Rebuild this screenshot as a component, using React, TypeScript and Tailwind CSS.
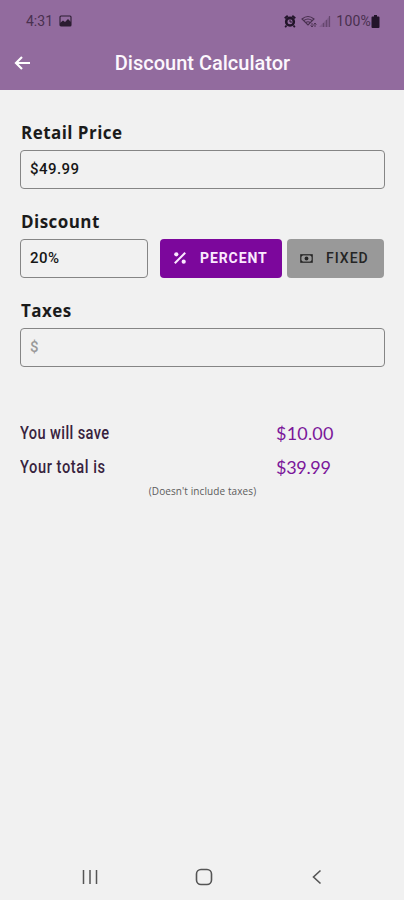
import React, { useState } from 'react';

function StatusBar() {
  return (
    <div className="flex h-[42px] items-center justify-between pl-[26px] pr-[24px] text-[#49304f]">
      <div className="flex items-center gap-[6px]">
        <span className="font-['Roboto'] text-[14px] leading-[16px]">4:31</span>
        <svg width="13" height="12" viewBox="0 0 13 12" className="text-[#2b1c31]">
          <rect x="1" y="1" width="11" height="10" rx="1" fill="none" stroke="currentColor" strokeWidth="1.1" />
          <path d="M1 11V8l3-2.5 2 1.5 3-3 3 3v4z" fill="currentColor" />
        </svg>
      </div>
      <div className="flex items-center">
        {/* Alarm */}
        <svg width="12" height="13" viewBox="0 0 12 13" className="mr-[5px] text-[#22152a]">
          <path d="M0.700 3.200l3-2.400M11.300 3.200L8.300 0.800M2.500 10.500l-1.300 1.700M9.500 10.500l1.300 1.700" stroke="currentColor" strokeWidth="1.800" />
          <circle cx="6" cy="6.700" r="3.800" fill="none" stroke="currentColor" strokeWidth="2.600" />
          <path d="M6 4.500v2.500h2" fill="none" stroke="currentColor" strokeWidth="1" />
        </svg>
        {/* Wifi */}
        <svg width="16" height="13" viewBox="0 0 16 13" className="mr-[2px]">
          <path d="M1 4Q7 -1 13 4L7 10ZM3 5.500Q7 2.500 11 5.500M5 7.500Q7 6 9 7.500" fill="none" stroke="currentColor" strokeWidth="1.100" />
          <path d="M11 12V8m-1.500 2.500L11 12l1.500-1.500M14 12V8m-1.500 1.500L14 8l1.500 1.500" fill="none" stroke="currentColor" strokeWidth="0.900" />
        </svg>
        {/* Signal */}
        <svg width="12" height="13" viewBox="0 0 12 13" className="mr-[5px] opacity-60">
          <path d="M0 12L11 1v11z" fill="currentColor" fillOpacity="0.35" />
          <path d="M4.500 12V8M7.500 12V5M10.500 12V1" stroke="currentColor" strokeWidth="1.200" />
        </svg>
        <span className="font-['Roboto'] text-[14px] leading-[16px] tracking-[0.2px]">100%</span>
        <svg width="9" height="13" viewBox="0 0 9 13" className="text-[#22152a]">
          <path d="M3 0h3v1.500h1.500Q8.500 1.500 8.500 2.500V12q0 1-1 1h-6q-1 0-1-1V2.500q0-1 1-1H3z" fill="currentColor" />
        </svg>
      </div>
    </div>
  );
}

function Label({ children }: { children: React.ReactNode }) {
  return (
    <div className="h-[28px] pl-px font-['Open_Sans'] text-[17px] font-bold leading-[22px] tracking-[0.45px] text-[#1b1b1b]">
      {children}
    </div>
  );
}

const fieldClass =
  "h-[39px] rounded-[4px] border border-[#858585] bg-transparent pl-[9px] pb-px font-['Roboto'] text-[15px] font-medium tracking-[0.45px] text-[#161616] outline-none placeholder:text-[#999999]";

export default function DiscountCalculator() {
  const [price, setPrice] = useState('$49.99');
  const [discount, setDiscount] = useState('20%');
  const [taxes, setTaxes] = useState('');

  return (
    <div className="flex h-[900px] w-[404px] flex-col overflow-hidden bg-[#f1f1f1]">
      <header className="h-[90px] bg-[#926b9e]">
        <StatusBar />
        <div className="grid h-[42px] grid-cols-[46px_1fr_45px] items-center">
          <button className="ml-[14px]" aria-label="Back">
            <svg width="17" height="16" viewBox="0 0 17 16" fill="none" stroke="white" strokeWidth="2.200">
              <path d="M16 8H2M8 2L2 8l6 6" />
            </svg>
          </button>
          <h1 className="whitespace-nowrap text-center font-['Roboto'] text-[20px] font-medium leading-[24px] text-[#fcf7fd]">
            Discount Calculator
          </h1>
        </div>
      </header>

      <main className="flex flex-1 flex-col pl-[20px] pr-[19px] pt-[32px]">
        <Label>Retail Price</Label>
        <input className={`${fieldClass} w-full`} value={price} onChange={(e) => setPrice(e.target.value)} />

        <div className="mt-[22px]">
          <Label>Discount</Label>
          <div className="flex">
            <input className={`${fieldClass} w-[128px]`} value={discount} onChange={(e) => setDiscount(e.target.value)} />
            <button className="ml-[12px] flex h-[39px] w-[122px] items-center rounded-[4px] bg-[#7c079c] pl-[14px] pb-px text-[#fbe9ff]">
              <svg width="12" height="12" viewBox="0 0 12 12">
                <path d="M0.800 11.200L11.200 0.800" stroke="currentColor" strokeWidth="2" />
                <circle cx="2.300" cy="2.300" r="2.100" fill="currentColor" />
                <circle cx="9.700" cy="9.700" r="2.100" fill="currentColor" />
              </svg>
              <span className="ml-[14px] font-['Roboto'] text-[14px] font-bold leading-[18px] tracking-[0.9px]">PERCENT</span>
            </button>
            <button className="ml-[5px] flex h-[39px] w-[97px] items-center rounded-[4px] bg-[#999999] pl-[13px] pb-px text-[#252525]">
              <svg width="13" height="9" viewBox="0 0 13 9">
                <rect x="0.800" y="0.800" width="11.400" height="7.400" fill="none" stroke="currentColor" strokeWidth="1.200" />
                <path d="M1 1h2L1 3zM12 1h-2l2 2zM1 8h2L1 6zM12 8h-2l2-2z" fill="currentColor" />
                <circle cx="6.500" cy="4.500" r="1.900" fill="currentColor" />
              </svg>
              <span className="ml-[13px] font-['Roboto'] text-[14px] font-medium leading-[18px] tracking-[1px]">FIXED</span>
            </button>
          </div>
        </div>

        <div className="mt-[22px]">
          <Label>Taxes</Label>
          <input
            className={`${fieldClass} w-full`}
            placeholder="$"
            value={taxes}
            onChange={(e) => setTaxes(e.target.value)}
          />
        </div>

        {/* Results */}
        <div className="mt-[49px] grid grid-cols-[256px_1fr] text-[18px] leading-[34px]">
          <div className="origin-left scale-x-[0.77] whitespace-nowrap font-['Roboto'] text-[19px] font-medium tracking-[0.5px] text-[#38233e]">
            You will save
          </div>
          <div className="font-['Lato'] tracking-[0.2px] text-[#7b179a]">$10.00</div>
          <div className="origin-left scale-x-[0.77] whitespace-nowrap font-['Roboto'] text-[19px] font-medium tracking-[0.75px] text-[#38233e]">
            Your total is
          </div>
          <div className="font-['Lato'] tracking-[-0.3px] text-[#7b179a]">$39.99</div>
        </div>
        <p className="-mt-px text-center font-['Open_Sans'] text-[10px] leading-[16px] tracking-[0.1px] text-[#5c5c5c]">(Doesn't include taxes)</p>
      </main>

      <nav className="flex h-[48px] items-center justify-between pl-[82px] pr-[82px] pt-px text-[#555555]">
        <svg width="16" height="16" viewBox="0 0 16 16" stroke="currentColor" strokeWidth="1.500">
          <path d="M1.500 1v14M8 1v14M14.500 1v14" />
        </svg>
        <svg className="mr-[2px]" width="18" height="18" viewBox="0 0 18 18" fill="none" stroke="currentColor" strokeWidth="1.600">
          <rect x="1.500" y="1.500" width="15" height="15" rx="4.500" />
        </svg>
        <svg width="10" height="16" viewBox="0 0 10 16" fill="none" stroke="currentColor" strokeWidth="1.600">
          <path d="M8.500 1.500L1.500 8l7 6.500" />
        </svg>
      </nav>
    </div>
  );
}
